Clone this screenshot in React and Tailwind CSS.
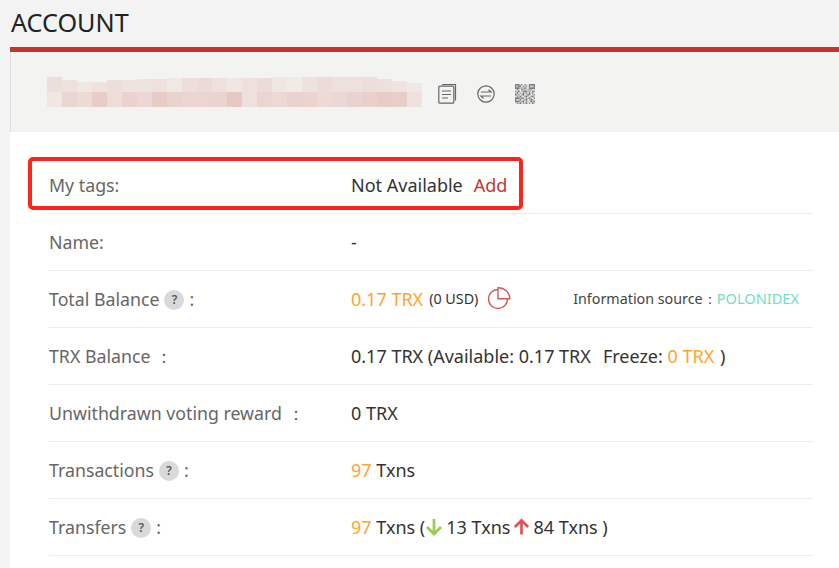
import { useEffect } from 'react';

// blurred address, one entry per 15px cell: [colour, height of top cell]
const topCells = [
  ['#ecdedb', 15], ['#eee0dd', 12], ['#f0e6e2', 10], ['#efe1de', 10], ['#eddede', 12], ['#efe3e0', 12], ['#efe3e0', 13],
  ['#efe2de', 13], ['#f1e7e4', 14], ['#eddedc', 14], ['#ebdad7', 14], ['#eee0dd', 14], ['#f0e7e5', 14], ['#eee0dd', 14],
  ['#ecdcd9', 14], ['#f0e6e2', 15], ['#f1ebe6', 15], ['#eee2df', 15], ['#ecdcd9', 15], ['#eee0dc', 15], ['#eee0dc', 15],
  ['#eddedb', 15], ['#eee0dd', 13], ['#f0e4e1', 11], ['#f1e8e5', 9],
];
const bottomCells = [
  '#f0e7e3', '#ead5d1', '#ecdbd5', '#e9ccca', '#eddcd8', '#ead2cf', '#ebd8d4', '#e8cbc5', '#ead3cf', '#ebd5d2', '#ebd5d2', '#ead4d1', '#e7c8c2',
  '#eee0dc', '#ead5d1', '#ecd8d4', '#ead3cf', '#ebd3d0', '#eddad6', '#ebd8d6', '#ead2cf', '#e9d0cb', '#e8cdc7', '#e8cdc9', '#efe2de',
];

// qr modules, 0 is empty and 1-3 go from light to dark
const qrRows = [
  '3331202103333',
  '3133021203013',
  '3331213103333',
  '0210312021201',
  '2130123312032',
  '1302031203120',
  '3120230132012',
  '0213102310231',
  '3331320213102',
  '3013012301320',
  '3331230210313',
  '0213021302031',
];
const qrFill = { 1: '#c4c4c4', 2: '#9a9a9a', 3: '#707070' };

function QrIcon() {
  return (
    <svg width="20" height="20" viewBox="0 0 13 12" preserveAspectRatio="none">
      {qrRows.map((row, y) =>
        row.split('').map((m, x) =>
          m === '0' ? null : <rect key={`${x}-${y}`} x={x} y={y} width="1" height="1" fill={qrFill[m]} />
        )
      )}
    </svg>
  );
}

function Help() {
  return (
    <span className="inline-flex items-center justify-center w-[20px] h-[20px] mx-[5px] mt-[3px] rounded-full bg-[#d9d9d9] text-[12px] font-semibold text-[#555]">
      ?
    </span>
  );
}

function Row({ label, children }) {
  return (
    <div className="h-[57px] flex items-center border-b border-[#ececec] pb-[1px]">
      <div className="w-[302px] shrink-0 flex items-center text-[17.75px] text-[#666] whitespace-nowrap">{label}</div>
      <div className="flex-1 flex items-center text-[#333] whitespace-nowrap">{children}</div>
    </div>
  );
}

function App() {
  useEffect(() => {
    document.title = 'Account';
  }, []);

  return (
    <div className="relative h-[568px] overflow-hidden bg-[#f3f3f3] font-['Noto_Sans',sans-serif] text-[18px] leading-[24px]">
      <h1 className="h-[47px] pl-[11px] pt-[5px] text-[25.2px] leading-[34px] text-[#222]">ACCOUNT</h1>

      <div className="ml-[10px] border-t-[5px] border-[#c23631]">
        {/* address, blurred out */}
        <div className="h-[80px] flex items-start pl-[36px] pt-[25px] bg-[#f3f3f2] border-l border-[#dcdcdc]">
          <div className="w-[375px] shrink-0">
            <div className="flex h-[15px] items-end">
              {topCells.map(([color, height], i) => (
                <div key={i} className="w-[15px]" style={{ backgroundColor: color, height }} />
              ))}
            </div>
            <div className="flex h-[15px]">
              {bottomCells.map((color, i) => (
                <div key={i} className="w-[15px]" style={{ backgroundColor: color }} />
              ))}
            </div>
          </div>
          <div className="flex items-center gap-[20px] ml-[16px] pt-[6px]">
            <svg width="19" height="21" viewBox="0 0 19 21" fill="none" stroke="#666" strokeWidth="1.2">
              <path d="M4 1.5h13.5v16" />
              <rect x="0.8" y="3.2" width="15" height="17" rx="1" />
              <path d="M4 8h9M4 11.5h9M4 15h6" />
            </svg>
            <svg width="18" height="18" viewBox="0 0 18 18" fill="none" stroke="#666" strokeWidth="1.2">
              <circle cx="9" cy="9" r="8.2" />
              <path d="M4 7h10l-2.5-2.2M14 11H4l2.5 2.2" />
            </svg>
            <QrIcon />
          </div>
        </div>

        <div className="h-[441px] bg-white pl-[39px] pr-[26px] pt-[25px]">
          <Row label="My tags:">
            Not Available
            <span className="ml-[11px] text-[#c23631]">Add</span>
          </Row>
          <Row label="Name:">-</Row>
          <Row
            label={
              <>
                Total Balance
                <Help />:
              </>
            }
          >
            <span className="text-[#ffa42e]">0.17 TRX</span>
            <span className="ml-[6px] text-[14.3px]">(0 USD)</span>
            <svg className="ml-[10px]" width="23" height="23" viewBox="0 0 23 23" fill="none" stroke="#d0585a" strokeWidth="1.4">
              <path d="M10 2.5A9.5 9.5 0 1 0 19.5 12" />
              <path d="M10 11.7V0.8A11 11 0 0 1 21.8 11.7z" />
            </svg>
            <span className="ml-auto pr-[14px] text-[14.3px] text-[#444]">
              Information source：
              <span className="text-[14.6px] text-[#6fe0c0]">POLONIDEX</span>
            </span>
          </Row>
          <Row label="TRX Balance ：">
            0.17 TRX (Available: 0.17 TRX
            <span className="ml-[12px]">Freeze:&nbsp;</span>
            <span className="text-[#ffa42e]">0 TRX</span>
            <span className="ml-[1px]">&nbsp;)</span>
          </Row>
          <Row label="Unwithdrawn voting reward ：">0 TRX</Row>
          <Row
            label={
              <>
                Transactions
                <Help />:
              </>
            }
          >
            <span className="text-[#ffa42e]">97</span>&nbsp;Txns
          </Row>
          <Row
            label={
              <>
                Transfers
                <Help />:
              </>
            }
          >
            <span className="text-[#ffa42e]">97</span>&nbsp;Txns (
            <svg className="mr-[3px]" width="18" height="18" viewBox="0 0 18 18" fill="none" stroke="#9bcb52" strokeWidth="2.8">
              <path d="M9 1v15M2 9l7 7 7-7" />
            </svg>
            13 Txns
            <svg className="mx-[3px]" width="17" height="18" viewBox="0 0 18 18" fill="none" stroke="#e2504f" strokeWidth="2.8">
              <path d="M9 17V2M2 9l7-7 7 7" />
            </svg>
            84 Txns )
          </Row>
        </div>
      </div>

      {/* annotation drawn over the screenshot */}
      <div className="absolute left-[28px] top-[157px] w-[495px] h-[53px] border-[4px] border-[#ff2419] rounded-[5px]" />
    </div>
  );
}

export default App;
